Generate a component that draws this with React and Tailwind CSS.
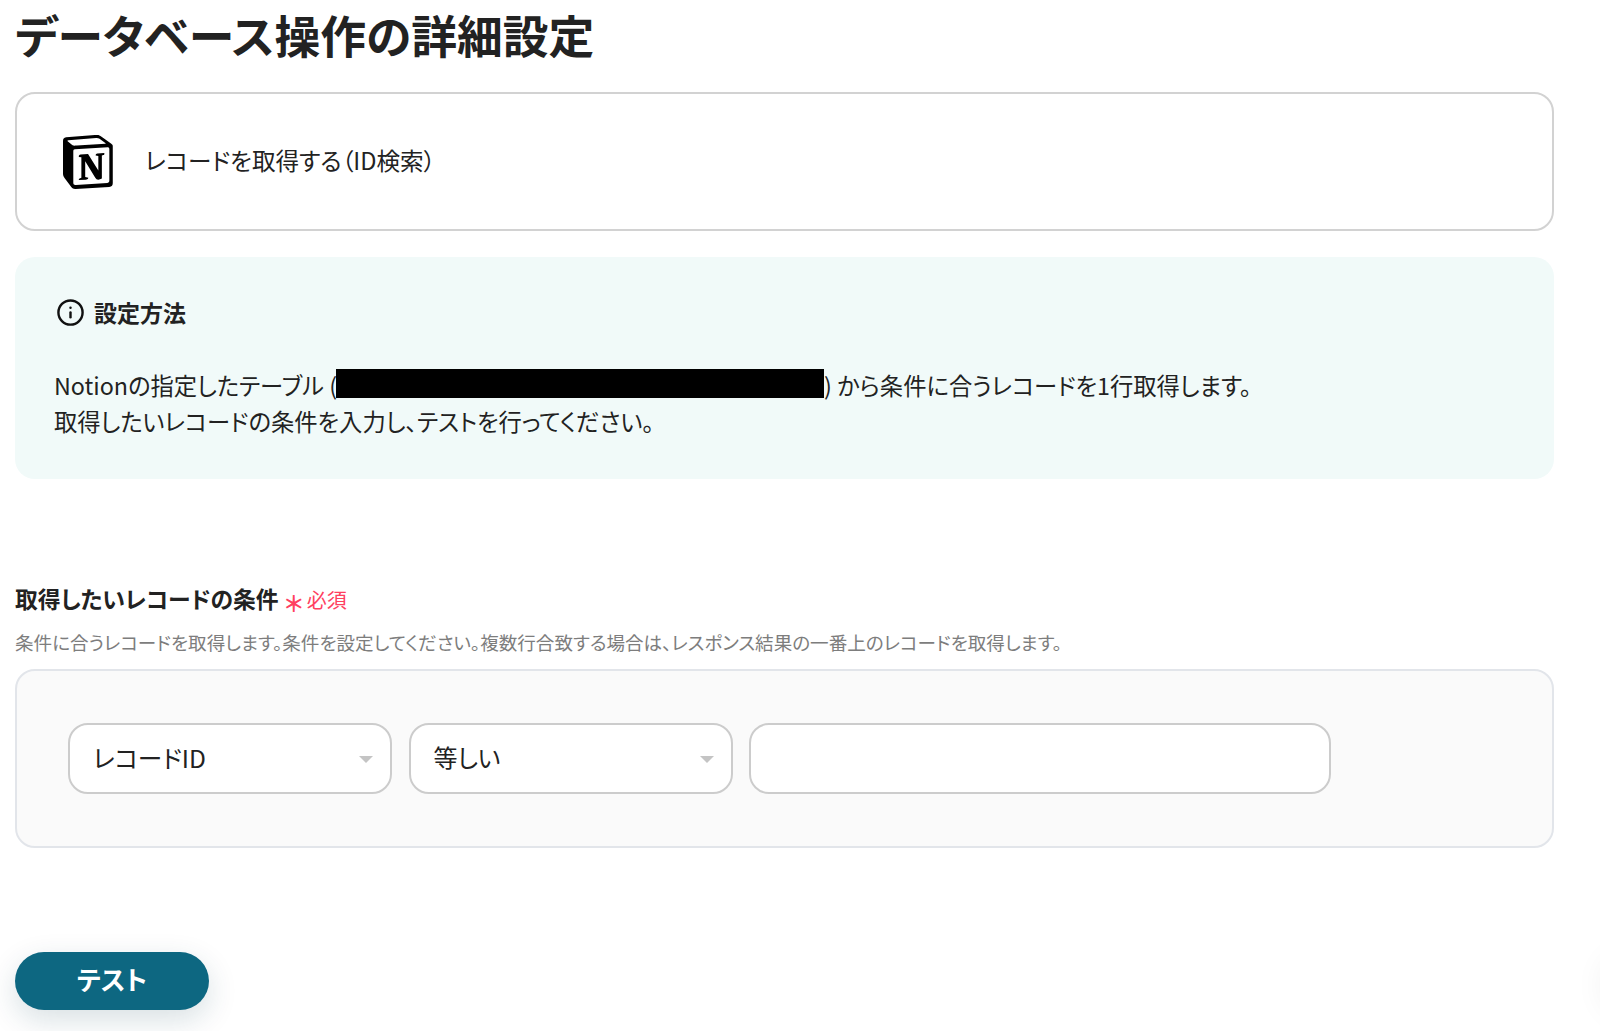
import React from 'react';
import { Info } from 'lucide-react';

const jp = 'font-["Noto_Sans_CJK_JP","Noto_Sans",sans-serif]';

// Notion logo
function NotionLogo() {
  return (
    <svg viewBox="0 0 100 100" className="w-[52px] h-[54px] shrink-0" preserveAspectRatio="none">
      <path
        fill="#fff"
        d="M6.017 4.313l55.333 -4.087c6.797 -0.583 8.543 -0.19 12.817 2.917l17.663 12.443c2.913 2.14 3.883 2.723 3.883 5.053v68.243c0 4.277 -1.553 6.807 -6.99 7.193L24.467 99.967c-4.08 0.193 -6.023 -0.39 -8.16 -3.113L3.3 79.94c-2.333 -3.113 -3.3 -5.443 -3.3 -8.167V11.113c0 -3.497 1.553 -6.413 6.017 -6.8z"
      />
      <path
        fill="#000"
        fillRule="evenodd"
        clipRule="evenodd"
        d="M61.35 0.227l-55.333 4.087C1.553 4.7 0 7.617 0 11.113v60.66c0 2.723 0.967 5.053 3.3 8.167l13.007 16.913c2.137 2.723 4.08 3.307 8.16 3.113l64.257 -3.89c5.433 -0.387 6.99 -2.917 6.99 -7.193V20.64c0 -2.21 -0.873 -2.847 -3.443 -4.733L74.167 3.143c-4.273 -3.107 -6.02 -3.5 -12.817 -2.917zM25.92 19.523c-5.247 0.353 -6.437 0.433 -9.417 -1.99L8.927 11.507c-0.77 -0.78 -0.383 -1.753 1.557 -1.947l53.193 -3.887c4.467 -0.39 6.793 1.167 8.54 2.527l9.123 6.61c0.39 0.197 1.36 1.36 0.193 1.36l-54.933 3.307 -0.68 0.047zM19.803 88.3V30.367c0 -2.53 0.777 -3.697 3.103 -3.893L86 22.78c2.14 -0.193 3.107 1.167 3.107 3.693v57.547c0 2.53 -0.39 4.67 -3.883 4.863l-60.377 3.5c-3.493 0.193 -5.043 -0.97 -5.043 -4.083zm59.6 -54.827c0.387 1.75 0 3.5 -1.75 3.7l-2.91 0.577v42.773c-2.527 1.36 -4.853 2.137 -6.797 2.137 -3.107 0 -3.883 -0.973 -6.21 -3.887l-19.03 -29.94v28.967l6.02 1.363s0 3.5 -4.857 3.5l-13.39 0.777c-0.39 -0.78 0 -2.723 1.357 -3.11l3.497 -0.97v-38.3L30.48 40.667c-0.39 -1.75 0.58 -4.277 3.3 -4.473l14.367 -0.967 19.8 30.327v-26.83l-5.047 -0.58c-0.39 -2.143 1.163 -3.7 3.103 -3.89l13.4 -0.78z"
      />
    </svg>
  );
}

function SelectBox({ label, size }) {
  return (
    <div className="w-[324px] h-[71px] flex items-center justify-between pl-[23px] pr-[17px] bg-white border-2 border-[#cccccc] rounded-[20px]">
      <span className={`${size} -mt-[3px] text-[#222222]`}>{label}</span>
      <span className="w-0 h-0 mt-[2px] border-x-[7px] border-x-transparent border-t-[7px] border-t-[#c4c4c4]" />
    </div>
  );
}

export default function App() {
  return (
    <div className={`${jp} relative h-[1031px] overflow-hidden bg-white pl-[15px] pr-[46px] [font-feature-settings:"palt"]`}>
      <h1 className="h-[92px] pt-[5px] text-[45.8px] leading-[58px] font-semibold text-[#222222]">
        データベース操作の詳細設定
      </h1>

      {/* Action card */}
      <div className="h-[139px] flex items-center gap-[30px] pl-[46px] bg-white border-2 border-[#d2d2d2] rounded-[20px]">
        <NotionLogo />
        <span className="text-[23.6px] leading-[30px] -mt-[3px] text-[#222222]">レコードを取得する（ID検索）</span>
      </div>

      {/* How to set up */}
      <div className="h-[222px] mt-[26px] pt-[41px] pl-[39px] bg-[#f1faf9] rounded-[20px]">
        <div className="h-[28px] flex items-center gap-[9px] pl-[2px]">
          <Info size={29} strokeWidth={2} className="text-[#111111]" />
          <span className="text-[23px] font-semibold text-[#222222]">設定方法</span>
        </div>
        <div className="mt-[41px] text-[23.3px] leading-[36px] text-[#222222]">
          <p className="flex items-center h-[36px]">
            <span>Notionの指定したテーブル (</span>
            <span className="w-[488px] h-[29px] -ml-[1px] -mt-[3px] bg-black shrink-0" />
            <span>) から条件に合うレコードを1行取得します。</span>
          </p>
          <p>取得したいレコードの条件を入力し、テストを行ってください。</p>
        </div>
      </div>

      {/* Condition field */}
      <div className="mt-[104px] h-[32px] flex items-center gap-[6px]">
        <span className="text-[22.8px] font-semibold text-[#222222]">取得したいレコードの条件</span>
        <span className="flex items-center gap-[4px] text-[#ff4060]">
          <span className="text-[22px] leading-[22px] mt-[5px] font-bold">＊</span>
          <span className="text-[20px] mt-[2px]">必須</span>
        </span>
      </div>
      <p className="mt-[14px] h-[26px] text-[18.57px] leading-[26px] text-[#7d7d7d]">
        条件に合うレコードを取得します。条件を設定してください。複数行合致する場合は、レスポンス結果の一番上のレコードを取得します。
      </p>
      <div className="mt-[14px] h-[179px] flex items-center gap-[16.5px] pl-[51px] bg-[#fafafa] border-2 border-[#e2e5ea] rounded-[20px]">
        <SelectBox label="レコードID" size="text-[24.6px]" />
        <SelectBox label="等しい" size="text-[24px]" />
        <div className="w-[582px] h-[71px] bg-white border-2 border-[#cccccc] rounded-[20px]" />
      </div>

      <button className="block mt-[104px] w-[194px] h-[58px] pb-[5px] rounded-full bg-[#0d6781] text-white text-[26px] font-semibold shadow-[0_10px_30px_rgba(13,60,80,0.16)]">
        テスト
      </button>

      {/* edge of a floating button that sits just off the page */}
      <div className="absolute right-[-70px] top-[950px] w-[70px] h-[70px] rounded-full shadow-[0_0_30px_rgba(0,0,0,0.05)]" />
    </div>
  );
}
